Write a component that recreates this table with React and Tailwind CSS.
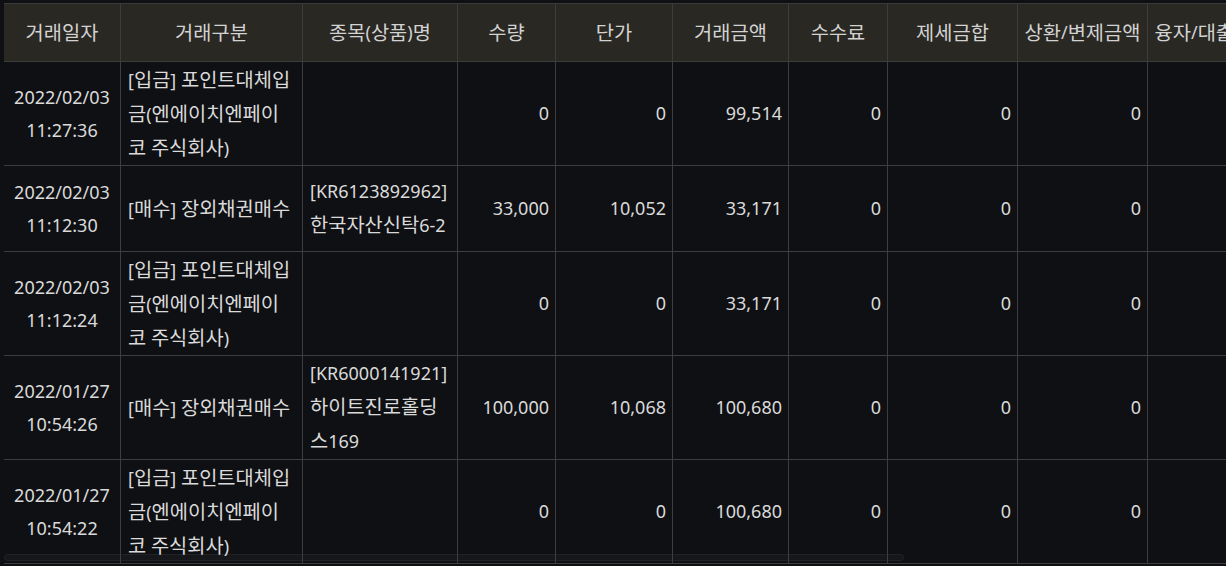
import React from 'react'

const cols = 'grid grid-cols-[117px_182px_155px_98px_117px_116px_99px_130px_130px_130px]'

const headers = ['거래일자', '거래구분', '종목(상품)명', '수량', '단가', '거래금액', '수수료', '제세금합', '상환/변제금액', '융자/대출금액']

const rows = [
  { h: 'h-[104px]', date: '2022/02/03', time: '11:27:36', kind: '[입금] 포인트대체입금(엔에이치엔페이코 주식회사)', item: '', qty: '0', price: '0', amount: '99,514' },
  { h: 'h-[86px]', date: '2022/02/03', time: '11:12:30', kind: '[매수] 장외채권매수', item: ['[KR6123892962]', '한국자산신탁6-2'], qty: '33,000', price: '10,052', amount: '33,171' },
  { h: 'h-[104px]', date: '2022/02/03', time: '11:12:24', kind: '[입금] 포인트대체입금(엔에이치엔페이코 주식회사)', item: '', qty: '0', price: '0', amount: '33,171' },
  { h: 'h-[104px]', date: '2022/01/27', time: '10:54:26', kind: '[매수] 장외채권매수', item: ['[KR6000141921]', '하이트진로홀딩스169'], qty: '100,000', price: '10,068', amount: '100,680' },
  { h: 'h-[104px]', date: '2022/01/27', time: '10:54:22', kind: '[입금] 포인트대체입금(엔에이치엔페이코 주식회사)', item: '', qty: '0', price: '0', amount: '100,680' },
]

const cell = 'border-r border-b border-[#3d3d3d] flex items-center'

// hangul runs get a slightly bigger size so their width matches the screenshot
function K({ children }) {
  return children.split(/([가-힣]+)/).map((part, i) =>
    /[가-힣]/.test(part) ? <span key={i} className="text-[19.8px] leading-[33px]">{part}</span> : part
  )
}

function Num({ children }) {
  return <div className={`${cell} justify-end pr-[6px]`}>{children}</div>
}

export default function App() {
  return (
    <div
      className="w-[1226px] h-[566px] bg-[#0f1013] overflow-hidden relative pt-[3px] pl-[4px]"
      style={{ fontFamily: '"Noto Sans", "Noto Sans CJK KR", sans-serif' }}
    >
      {/* horizontal scrollbar thumb, sits under the table text */}
      <div className="absolute left-[4px] top-[554px] w-[900px] h-[7px] rounded-full bg-[#16171a] border border-[#212225]"></div>

      <div className="relative w-[1274px] border-t border-[#3a3a3a] text-[18px] leading-[33px]">
        <div className={`${cols} h-[58px] bg-[#2a2823] text-[#d2d2d2]`}>
          {headers.map((t) => (
            <div key={t} className={`${cell} justify-center whitespace-nowrap`}><K>{t}</K></div>
          ))}
        </div>

        {rows.map((r, i) => (
          <div key={i} className={`${cols} ${r.h} text-[#dadada]`}>
            <div className={`${cell} justify-center text-center`}>
              <div>
                <div>{r.date}</div>
                <div>{r.time}</div>
              </div>
            </div>
            <div className={`${cell} pl-[7px] pr-[10px]`}>
              <div><K>{r.kind}</K></div>
            </div>
            <div className={`${cell} pl-[7px] pr-[7px]`}>
              {r.item && (
                <div>
                  <div>{r.item[0]}</div>
                  <div><K>{r.item[1]}</K></div>
                </div>
              )}
            </div>
            <Num>{r.qty}</Num>
            <Num>{r.price}</Num>
            <Num>{r.amount}</Num>
            <Num>0</Num>
            <Num>0</Num>
            <Num>0</Num>
            <div className={cell}></div>
          </div>
        ))}
      </div>
    </div>
  )
}
